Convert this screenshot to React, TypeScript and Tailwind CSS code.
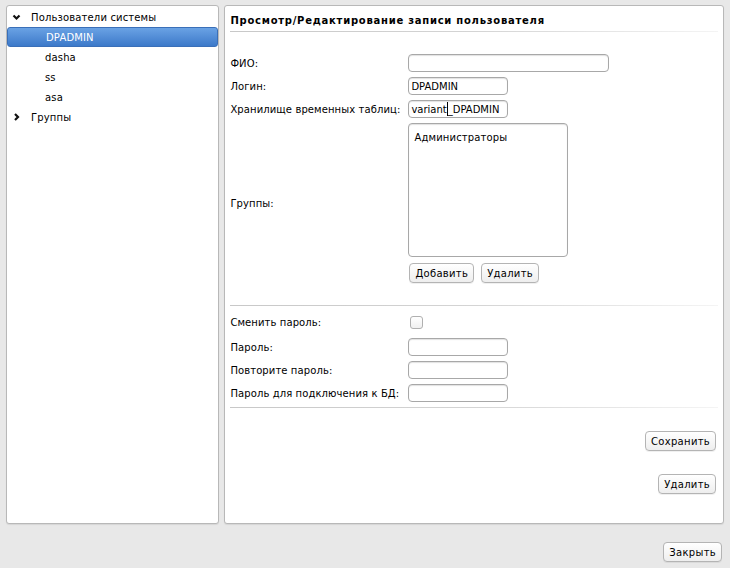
import React from "react";

const font = "font-['DejaVu_Sans',sans-serif]";

function Btn({ children, className = "" }: { children: React.ReactNode; className?: string }) {
  return (
    <button
      className={`h-[20px] px-[5px] rounded-[4px] border border-[#b4b4b4] bg-gradient-to-b from-white to-[#eeeeee] text-[10px] tracking-[0.3px] text-black shadow-[0_1px_0_rgba(0,0,0,0.06)] ${className}`}
    >
      {children}
    </button>
  );
}

function Field({ value = "", w = "w-[100px]", cursor = false }: { value?: string; w?: string; cursor?: boolean }) {
  return (
    <div
      className={`${w} h-[18px] rounded-[4px] border border-[#a8a8a8] bg-white shadow-[inset_0_1px_1px_rgba(0,0,0,0.12)] px-[2px] flex items-center text-[10px] text-black overflow-hidden whitespace-nowrap`}
    >
      {cursor ? (
        <>
          varian<span className="border-r border-black h-[14px]">t</span>_DPADMIN
        </>
      ) : (
        value
      )}
    </div>
  );
}

function Row({ label, h, children }: { label: string; h: string; children: React.ReactNode }) {
  return (
    <div className={`flex items-center ${h}`}>
      <div className="w-[178px] shrink-0 whitespace-nowrap tracking-[0.1px]">{label}</div>
      {children}
    </div>
  );
}

function Sep({ className = "" }: { className?: string }) {
  return <div className={`h-px bg-gradient-to-r from-[#c8c8c8] via-[#d4d4d4] to-[#f4f4f4] ${className}`} />;
}

export default function App() {
  const users = ["DPADMIN", "dasha", "ss", "asa"];
  return (
    <div className={`w-[730px] h-[568px] bg-[#e8e8e8] ${font} text-[10px] text-black flex flex-col`}>
      <div className="flex gap-[5px] pl-[6px] pr-[6px] pt-[5px] h-[524px]">
        {/* tree */}
        <div className="w-[214px] h-[519px] bg-white border border-[#b8b8b8] rounded-[3px] shadow-[0_1px_1px_rgba(0,0,0,0.08)] pt-[1px]">
          <div className="flex items-center h-[20px] pl-[4px] tracking-[0.15px]">
            <svg width="11" height="10" viewBox="0 0 11 10" className="mr-[9px]">
              <path d="M2.5 3.5 L5.5 6.5 L8.5 3.5" fill="none" stroke="#111" strokeWidth="2.2" />
            </svg>
            Пользователи системы
          </div>
          {users.map((u, i) => (
            <div
              key={u}
              className={`h-[20px] flex items-center pl-[38px] tracking-[0.15px] ${
                i === 0
                  ? "bg-gradient-to-b from-[#6aa2e4] to-[#3c79c9] text-white rounded-[3px] border border-[#3a6fb8]"
                  : ""
              }`}
            >
              {u}
            </div>
          ))}
          <div className="flex items-center h-[20px] pl-[4px] tracking-[0.15px]">
            <svg width="11" height="10" viewBox="0 0 11 10" className="mr-[9px]">
              <path d="M4 2 L7 5 L4 8" fill="none" stroke="#111" strokeWidth="2.2" />
            </svg>
            Группы
          </div>
        </div>

        {/* form */}
        <div className="w-[501px] h-[519px] bg-white border border-[#b8b8b8] rounded-[3px] shadow-[0_1px_1px_rgba(0,0,0,0.08)] px-[5px] flex flex-col">
          <div className="h-[25px] pt-[7px] font-bold text-[10px] tracking-[0.75px]">Просмотр/Редактирование записи пользователя</div>
          <Sep />
          <div className="h-[22px]" />
          <Row label="ФИО:" h="h-[18px]">
            <Field w="w-[201px]" />
          </Row>
          <div className="h-[5px]" />
          <Row label="Логин:" h="h-[18px]">
            <Field value="DPADMIN" />
          </Row>
          <div className="h-[5px]" />
          <Row label="Хранилище временных таблиц:" h="h-[18px]">
            <Field cursor />
          </Row>
          <div className="h-[5px]" />
          <Row label="Группы:" h="h-[160px]">
            <div className="flex flex-col">
              <div className="w-[160px] h-[134px] rounded-[4px] border border-[#a8a8a8] shadow-[inset_0_1px_1px_rgba(0,0,0,0.12)] px-[5px] pt-[6px] tracking-[0.15px]">
                Администраторы
              </div>
              <div className="flex gap-[7px] pl-[1px] mt-[6px]">
                <Btn>Добавить</Btn>
                <Btn>Удалить</Btn>
              </div>
            </div>
          </Row>
          <Sep className="mt-[22px]" />
          <div className="h-[9px]" />
          <Row label="Сменить пароль:" h="h-[14px]">
            <div className="ml-[2px] w-[13px] h-[13px] rounded-[3px] border border-[#b0b0b0] bg-gradient-to-b from-white to-[#f0f0f0]" />
          </Row>
          <div className="h-[9px]" />
          <Row label="Пароль:" h="h-[18px]">
            <Field />
          </Row>
          <div className="h-[5px]" />
          <Row label="Повторите пароль:" h="h-[18px]">
            <Field />
          </Row>
          <div className="h-[5px]" />
          <Row label="Пароль для подключения к БД:" h="h-[18px]">
            <Field />
          </Row>
          <Sep className="mt-[5px]" />
          <div className="flex justify-end mt-[23px] pr-[2px]">
            <Btn>Сохранить</Btn>
          </div>
          <div className="flex justify-end mt-[23px] pr-[2px]">
            <Btn>Удалить</Btn>
          </div>
        </div>
      </div>
      <div className="flex justify-end pr-[8px] mt-[18px]">
        <Btn>Закрыть</Btn>
      </div>
    </div>
  );
}
